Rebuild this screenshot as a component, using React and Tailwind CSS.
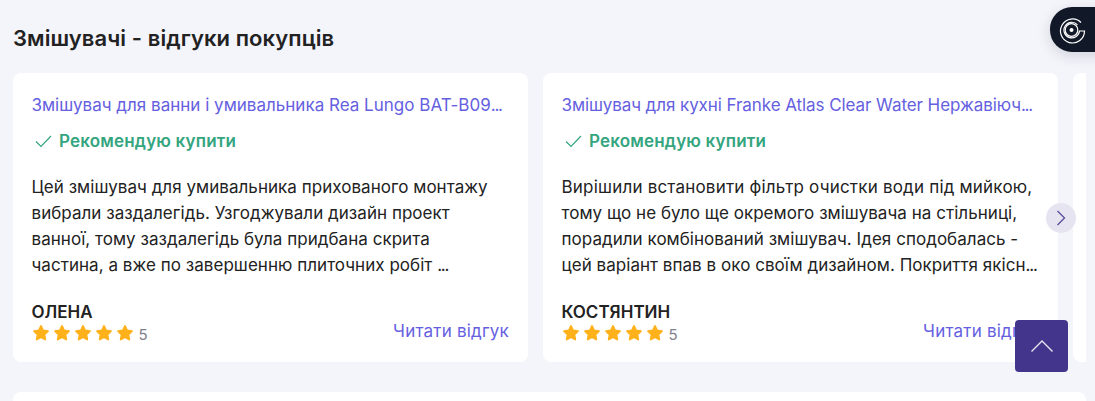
import React from "react";

const Star = () => (
  <svg width="18" height="17" viewBox="0 0 18 17" className="block">
    <path d="M9 2l2.100 4.500 4.900.7-3.600 3.400.9 4.900L9 13.200l-4.300 2.300.9-4.900L2 7.200l4.900-.7z" fill="#FFB11B" stroke="#FFB11B" strokeWidth="1.800" strokeLinejoin="round" />
  </svg>
);

function Dots() {
  return <span className="tracking-[-1.2px]">...</span>;
}

function Card({ title, titleClass, text, name, first }) {
  return (
    <div className="w-[515px] h-[289px] shrink-0 bg-white rounded-lg pt-[21px] pl-[18.500px] pr-[19px] flex flex-col">
      <a className={titleClass}>{title}<Dots /></a>
      <div className="flex items-center mt-[14px] h-[22px] pl-[3.500px]">
        <svg width="17" height="14" viewBox="0 0 17 14" fill="none" stroke="#34A57F" strokeWidth="1.200"><path d="M1 7.500 L6 12.500 L16 2" /></svg>
        <span className="ml-[7px] text-[17px] leading-[22px] font-semibold tracking-[0.18px] text-[#34A57F]">Рекомендую купити</span>
      </div>
      <p className="mt-[22px] text-[17px] leading-[26px] tracking-[0.04px] text-[#222222] h-[104px]">
        <span className={first}>{text[0]}</span>
        <span className="block whitespace-nowrap">{text[1]}</span>
        <span className="block whitespace-nowrap">{text[2]}</span>
        <span className="block whitespace-nowrap">{text[3]}<Dots /></span>
      </p>
      <div className="mt-[23px] flex justify-between items-end">
        <div>
          <div className="text-[17px] leading-[20px] font-semibold text-[#222222] pt-[1px]">{name}</div>
          <div className="flex items-center h-[20px] pt-[1px]">
            <div className="flex gap-[3px]">
              <Star /><Star /><Star /><Star /><Star />
            </div>
            <span className="ml-[5px] text-[15px] leading-[20px] text-[#808089] mt-[4px]">5</span>
          </div>
        </div>
        <a className="text-[17px] leading-[22px] text-[#6560E0] tracking-[0.2px]">Читати відгук</a>
      </div>
    </div>
  );
}

export default function App() {
  return (
    <div className="relative w-[1095px] h-[401px] overflow-hidden bg-[#F4F5FB] font-['Inter',sans-serif]">
      <div className="pl-[13px] pr-[9px] pt-[24px]">
        <h2 className="text-[22px] leading-[28px] font-semibold tracking-[0.07px] text-[#222222]">Змішувачі - відгуки покупців</h2>
        <div className="relative mt-[21px]">
          <div className="flex gap-[15px] overflow-hidden">
            <Card
              title="Змішувач для ванни і умивальника Rea Lungo BAT-B09"
              titleClass="block whitespace-nowrap text-[17px] leading-[22px] tracking-[0.01px] text-[#6560E0]"
              text={["Цей змішувач для умивальника прихованого монтажу", "вибрали заздалегідь. Узгоджували дизайн проект", "ванної, тому заздалегідь була придбана скрита", "частина, а вже по завершенню плиточних робіт "]}
              first="block whitespace-nowrap"
              name="ОЛЕНА"
            />
            <Card
              title="Змішувач для кухні Franke Atlas Clear Water Нержавіюч"
              titleClass="block whitespace-nowrap text-[17px] leading-[22px] tracking-[-0.07px] text-[#6560E0]"
              text={["Вирішили встановити фільтр очистки води під мийкою,", "тому що не було ще окремого змішувача на стільниці,", "порадили комбінований змішувач. Ідея сподобалась -", "цей варіант впав в око своїм дизайном. Покриття якісн"]}
              first="block whitespace-nowrap tracking-[0.2px]"
              name="КОСТЯНТИН"
            />
            <div className="w-[515px] h-[289px] shrink-0 bg-white rounded-lg" />
          </div>
          <button className="absolute left-[1033px] top-[130px] w-[30px] h-[30px] rounded-full bg-[#E6E4F0] flex items-center justify-center">
            <svg width="10" height="16" viewBox="0 0 10 16" fill="none" stroke="#5B4B9A" strokeWidth="1.300"><path d="M1.500 1 L8.500 8 L1.500 15" /></svg>
          </button>
        </div>
        <div className="mt-[30px] h-[60px] bg-white rounded-lg" />
      </div>

      <div className="absolute left-[1050px] top-[7px] w-[60px] h-[45px] rounded-l-[22px] bg-[#111827] shadow-[0_4px_14px_rgba(17,24,39,0.15)] flex items-center pl-[8px]">
        <svg width="28" height="28" viewBox="0 0 28 28" fill="none" stroke="#FFFFFF" strokeWidth="1.200">
          <path d="M23 6.500 A 12 12 0 1 0 26.500 15 L 21.500 15 A 7.800 7.800 0 1 1 19.500 8.800" />
          <circle cx="13.500" cy="14" r="6.300" />
          <circle cx="13.500" cy="14" r="2" fill="#FFFFFF" stroke="none" />
        </svg>
      </div>

      <button className="absolute left-[1015px] top-[320px] w-[53px] h-[52px] rounded-[4px] bg-[#44358C] flex items-center justify-center">
        <svg width="24" height="14" viewBox="0 0 24 14" fill="none" stroke="#E8E6F2" strokeWidth="1.400"><path d="M1.500 12.500 L12 2 L22.500 12.500" /></svg>
      </button>
    </div>
  );
}
